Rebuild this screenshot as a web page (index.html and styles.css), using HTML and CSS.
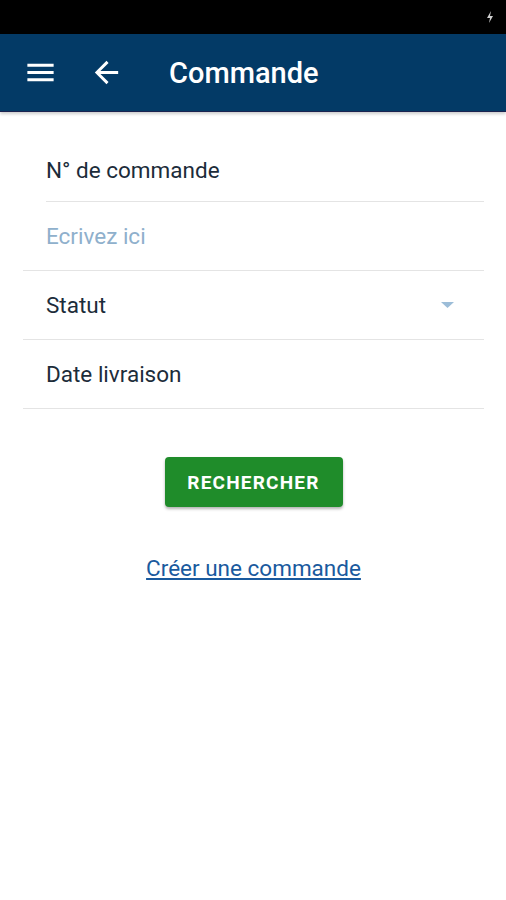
FILE: index.html
```html
<!DOCTYPE html>
<html lang="fr">
<head>
    <meta charset="UTF-8">
    <meta name="viewport" content="width=device-width, initial-scale=1.0">
    <title>Commande</title>
    <link rel="stylesheet" href="styles.css">
</head>
<body>
    <div class="statusbar">
        <svg class="bolt" width="8" height="12" viewBox="0 0 8 12">
            <path d="M5 0 L1 7 H4 L3 12 L7 5 H4 Z" fill="#cfcfcf"/>
        </svg>
    </div>

    <header class="appbar">
        <svg class="icon" width="35" height="35" viewBox="0 0 24 24">
            <path d="M3 18h18v-2H3v2zm0-5h18v-2H3v2zm0-7v2h18V6H3z" fill="#ffffff"/>
        </svg>
        <svg class="icon back" width="35" height="35" viewBox="0 0 24 24">
            <path d="M20 11H7.83l5.59-5.59L12 4l-8 8 8 8 1.41-1.41L7.83 13H20v-2z" fill="#ffffff"/>
        </svg>
        <h1 class="title">Commande</h1>
    </header>

    <main class="form">
        <div class="row first">
            <span class="label">N° de commande</span>
        </div>
        <div class="row">
            <span class="placeholder">Ecrivez ici</span>
        </div>
        <div class="row">
            <span class="label">Statut</span>
            <svg class="caret" width="15" height="8" viewBox="0 0 15 8">
                <path d="M1 1 H14 L7.5 7 Z" fill="#9cbdd8"/>
            </svg>
        </div>
        <div class="row">
            <span class="label">Date livraison</span>
        </div>

        <div class="actions">
            <button class="btn">RECHERCHER</button>
            <a class="link" href="#">Créer une commande</a>
        </div>
    </main>
</body>
</html>
```

FILE: styles.css
```css
body {
    margin     : 0;
    font-family: Roboto, "Noto Sans", sans-serif;
    background : #ffffff;
}

.statusbar {
    height          : 34px;
    background-color: #000000;
    display         : flex;
    justify-content : flex-end;
    align-items     : center;
    padding-right   : 12px;
}

.appbar {
    height          : 77px;
    background-color: #033a66;
    border-bottom   : 1px solid #1b2350;
    display         : flex;
    align-items     : center;
    padding-left    : 23px;
    box-shadow      : 0 2px 3px rgba(0, 0, 0, 0.2);
}

.icon.back {
    margin-left: 31px;
}

.title {
    margin     : 0 0 0 45px;
    color      : #ffffff;
    font-size  : 29px;
    font-weight: 500;
}

.form {
    padding: 2px 22px 0 23px;
}

.row {
    height         : 69px;
    display        : flex;
    align-items    : center;
    justify-content: space-between;
    padding        : 0 29px 0 23px;
    border-bottom  : 1px solid #e4e4e4;
    box-sizing     : border-box;
    font-size      : 22.5px;
}

/* first divider is inset to the text */
.row.first {
    height      : 88px;
    padding-top : 24px;
    padding-left: 0;
    margin-left : 23px;
}

.label {
    color: #1c2c3a;
}

.placeholder {
    color: #8fb0cc;
}

.actions {
    display       : flex;
    flex-direction: column;
    align-items   : center;
    padding-top   : 48px;
}

.btn {
    width           : 178px;
    height          : 50px;
    border          : none;
    border-radius   : 4px;
    background-color: #1f8c2a;
    color           : #ffffff;
    font-family     : Roboto, sans-serif;
    font-size       : 19px;
    font-weight     : 700;
    letter-spacing  : 1.2px;
    box-shadow      : 0 2px 3px rgba(0, 0, 0, 0.3);
}

.link {
    margin-top     : 48px;
    color          : #1a5a9e;
    font-size      : 22.5px;
    text-decoration: underline;
}
```
